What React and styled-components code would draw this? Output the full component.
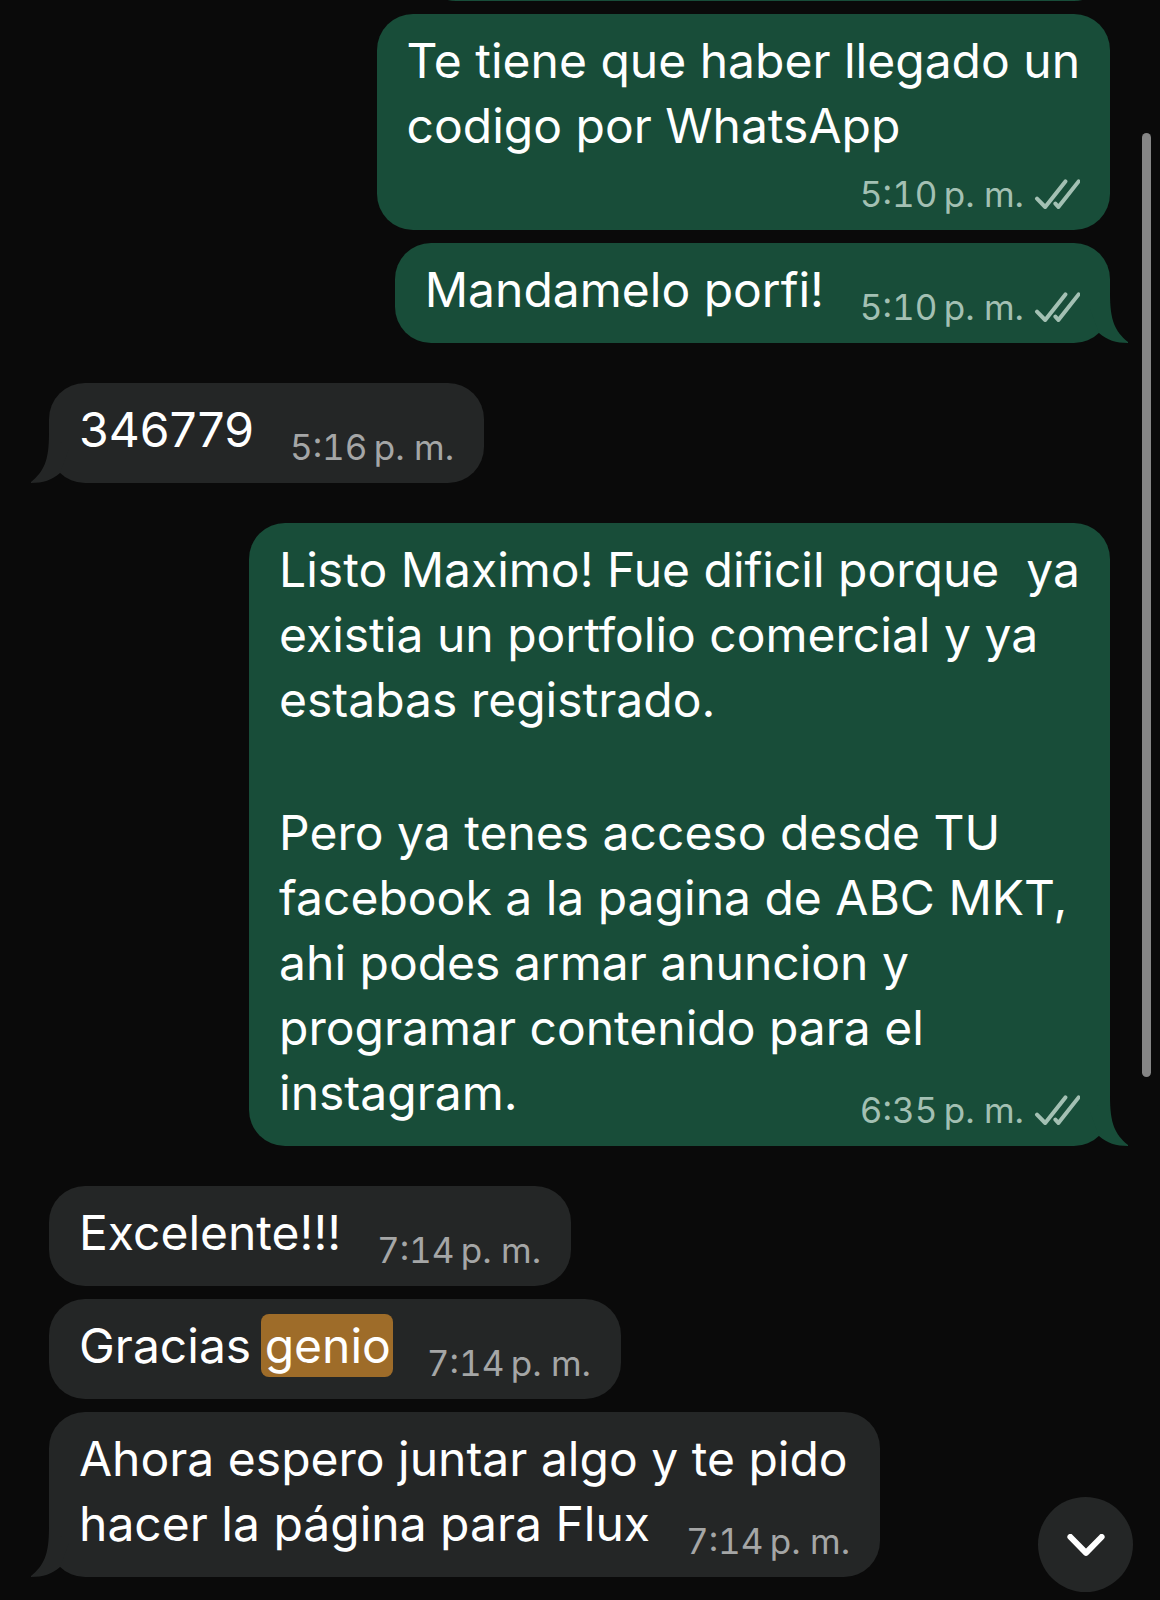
import React from "react";
import styled, { createGlobalStyle } from "styled-components";

const messages = [
	{
		id: 1,
		out: true,
		ownRow: true,
		text: ["Te tiene que haber llegado un\ncodigo por WhatsApp"],
		time: "5:10",
	},
	{ id: 2, out: true, tail: true, text: ["Mandamelo porfi!"], time: "5:10" },
	{ id: 3, tail: true, newGroup: true, text: ["346779"], time: "5:16" },
	{
		id: 4,
		out: true,
		tail: true,
		newGroup: true,
		text: [
			"Listo Maximo! Fue dificil porque  ya\nexistia un portfolio comercial y ya\nestabas registrado.",
			"Pero ya tenes acceso desde TU\nfacebook a la pagina de ABC MKT,\nahi podes armar anuncion y\nprogramar contenido para el\ninstagram.",
		],
		time: "6:35",
	},
	{ id: 5, newGroup: true, text: ["Excelente!!!"], time: "7:14" },
	{ id: 6, text: ["Gracias genio"], highlight: "genio", time: "7:14" },
	{
		id: 7,
		tail: true,
		text: ["Ahora espero juntar algo y te pido\nhacer la página para Flux"],
		time: "7:14",
	},
];

function Highlighted({ text, word }) {
	if (!word) return text;
	const [before, after] = text.split(word);
	return (
		<>
			{before}
			<Mark>{word}</Mark>
			{after}
		</>
	);
}

function Ticks() {
	return (
		<TicksIcon viewBox="0 0 46 30" role="img" aria-label="Entregado">
			<path d="M3 19.6 11.2 28 31.4 2.4" />
			<path d="M21.4 24.6 24.4 28 44.6 2.4" />
		</TicksIcon>
	);
}

function Message({ message }) {
	const { out, tail, newGroup, ownRow, text, highlight, time } = message;
	const paragraphs = text.map((part) => part.split("\n"));
	const lastLine = paragraphs[paragraphs.length - 1].pop();

	const meta = (
		<Meta $out={out}>
			<time>{time}{"\u2009"}p. m.</time>
			{out && <Ticks />}
		</Meta>
	);

	return (
		<Row $out={out} $newGroup={newGroup}>
			<Bubble $out={out}>
				{paragraphs.map((lines, i) => (
					<Paragraph key={i}>
						{lines.map((line) => (
							<Line key={line}>{line}</Line>
						))}
						{i === paragraphs.length - 1 && (
							<LastLine>
								<Line>
									<Highlighted text={lastLine} word={highlight} />
								</Line>
								{!ownRow && meta}
							</LastLine>
						)}
					</Paragraph>
				))}
				{ownRow && <MetaRow>{meta}</MetaRow>}
				{tail && (
					<Tail $out={out} viewBox="0 0 38 50" aria-hidden="true">
						<path d="M9 40C17 47 26 50 38 50V49C25 38 20 28 20 0L0 16Z" />
					</Tail>
				)}
			</Bubble>
		</Row>
	);
}

export default function App() {
	return (
		<>
			<GlobalStyle />
			<Chat>
				<PreviousBubble />
				{messages.map((message) => (
					<Message key={message.id} message={message} />
				))}
			</Chat>
			<ScrollThumb />
			<ScrollDown type="button" aria-label="Ir al final">
				<svg width="38" height="22" viewBox="0 0 38 22" aria-hidden="true">
					<path d="M3.4 3 19 18.8 34.6 3" />
				</svg>
			</ScrollDown>
		</>
	);
}

const GlobalStyle = createGlobalStyle`
  * {
    box-sizing: border-box;
  }

  body {
    margin: 0;
    background: #0a0a0a;
    color: #fff;
    font-family: "Inter", "Liberation Sans", sans-serif;
  }
`;

const Chat = styled.main`
  display: flex;
  flex-direction: column;
  min-height: 100vh;
  padding: 0 50px 20px 49px;
  overflow: hidden;
`;

// bottom edge of the message that is scrolled out of view
const PreviousBubble = styled.div`
  align-self: flex-end;
  flex: none;
  width: 65%;
  height: 80px;
  margin-top: -79px;
  border-radius: 36px;
  background: #184d39;
`;

const Row = styled.div`
  display: flex;
  justify-content: ${(p) => (p.$out ? "flex-end" : "flex-start")};
  margin-top: ${(p) => (p.$newGroup ? 40 : 13)}px;
`;

const Bubble = styled.div`
  position: relative;
  max-width: 100%;
  padding: 14px 30px 21px;
  border-radius: 36px;
  background: ${(p) => (p.$out ? "#184d39" : "#242626")};
`;

const Paragraph = styled.div`
  font-size: 48px;
  line-height: 65px;

  & + & {
    margin-top: 68px;
  }
`;

const Line = styled.span`
  display: block;
  white-space: pre-wrap;
`;

const LastLine = styled.div`
  display: flex;
  align-items: flex-end;
  justify-content: space-between;
  gap: 36px;
`;

const Meta = styled.div`
  display: flex;
  flex: none;
  align-items: center;
  gap: 10px;
  font-size: 35px;
  line-height: 30px;
  font-variant-numeric: tabular-nums;
  white-space: nowrap;
  color: ${(p) => (p.$out ? "#a3c0b3" : "#a5a6a6")};
`;

const MetaRow = styled.div`
  display: flex;
  justify-content: flex-end;
  margin-top: 21px;
`;

const Mark = styled.mark`
  margin: 0 -2px 0 -4px;
  padding: 2px 2px 2px 4px;
  border-radius: 8px;
  background: #9e6c29;
  color: #fff;
`;

const TicksIcon = styled.svg`
  width: 46px;
  height: 30px;
  fill: none;
  stroke: currentColor;
  stroke-width: 4;
  stroke-linecap: round;
  stroke-linejoin: round;
`;

const Tail = styled.svg`
  position: absolute;
  bottom: 0;
  width: 38px;
  height: 50px;
  fill: ${(p) => (p.$out ? "#184d39" : "#242626")};
  ${(p) =>
		p.$out
			? "right: -18px;"
			: "left: -18px; transform: scaleX(-1);"}
`;

const ScrollThumb = styled.div`
  position: fixed;
  top: 133px;
  right: 9px;
  width: 9px;
  height: 59vh;
  border-radius: 5px;
  background: #858585;
`;

const ScrollDown = styled.button`
  position: fixed;
  right: 27px;
  bottom: 8px;
  display: flex;
  align-items: center;
  justify-content: center;
  width: 95px;
  height: 95px;
  padding: 0;
  border: none;
  border-radius: 50%;
  background: #242626;
  cursor: pointer;

  path {
    fill: none;
    stroke: #fff;
    stroke-width: 6;
    stroke-linecap: round;
    stroke-linejoin: round;
  }
`;
